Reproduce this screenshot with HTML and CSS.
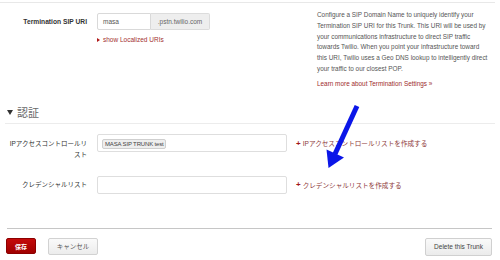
FILE: index.html
```html
<!DOCTYPE html>
<html lang="ja">
<head>
<meta charset="utf-8">
<title>Trunk settings</title>
<link rel="stylesheet" href="styles.css">
</head>
<body>
<div class="page">
  <div class="rule-top"></div>

  <div class="row row-uri">
    <div class="label label-bold">Termination SIP URI</div>
    <div class="field">
      <div class="input-group">
        <div class="input input-short">masa</div>
        <div class="addon">.pstn.twilio.com</div>
      </div>
      <a class="toggle" href="#"><span class="caret"></span>show Localized URIs</a>
    </div>
    <div class="help">
      <p class="help-text">Configure a SIP Domain Name to uniquely identify your Termination SIP URI for this Trunk. This URI will be used by your communications infrastructure to direct SIP traffic towards Twilio. When you point your infrastructure toward this URI, Twilio uses a Geo DNS lookup to intelligently direct your traffic to our closest POP.</p>
      <a class="help-link" href="#">Learn more about Termination Settings »</a>
    </div>
  </div>

  <div class="section-head"><span class="tri"></span>認証</div>

  <div class="row row-list">
    <div class="label">IPアクセスコントロールリスト</div>
    <div class="input input-wide"><span class="tag">MASA SIP TRUNK test</span></div>
    <a class="create" href="#"><span class="plus">+</span>IPアクセスコントロールリストを作成する</a>
  </div>

  <div class="row row-list row-cred">
    <div class="label">クレデンシャルリスト</div>
    <div class="input input-wide"></div>
    <a class="create" href="#"><span class="plus">+</span>クレデンシャルリストを作成する</a>
  </div>

  <div class="footer">
    <div class="btn-group">
      <button class="btn btn-save">保存</button>
      <button class="btn btn-cancel">キャンセル</button>
    </div>
    <button class="btn btn-delete">Delete this Trunk</button>
  </div>

  <svg class="arrow" width="500" height="260" viewBox="0 0 500 260">
    <line x1="357" y1="104" x2="335" y2="152" stroke="#0b16e8" stroke-width="5"/>
    <polygon points="326.5,147.5 344,155.5 328.5,166" fill="#0b16e8"/>
  </svg>
</div>
</body>
</html>
```

FILE: styles.css
```css
* { box-sizing: border-box; }

html, body {
  margin: 0;
  padding: 0;
  background: #fff;
}

body {
  font-family: "Liberation Sans", Arial, "Noto Sans CJK JP", sans-serif;
  font-size: 6.5px;
  color: #333;
  width: 500px;
  height: 260px;
  overflow: hidden;
}

a { text-decoration: none; }

.page {
  position: relative;
  padding: 0 5px;
  width: 500px;
}

.rule-top {
  height: 1px;
  background: #e8e8e8;
  margin: 2px -5px 0 -5px;
  width: 495px;
}

.row {
  display: flex;
  align-items: flex-start;
}

.row-uri {
  margin-top: 7px;
}

.label {
  width: 82px;
  flex: none;
  text-align: right;
  line-height: 11px;
  color: #333;
  font-family: "Liberation Sans", "Noto Sans CJK JP", sans-serif;
}

.label-bold {
  font-weight: bold;
  font-size: 6.7px;
  padding-top: 6px;
}

.field {
  width: 190px;
  margin-left: 10px;
  flex: none;
  padding-top: 3px;
}

.input-group {
  display: flex;
  height: 17px;
}

.input {
  border: 1px solid #d9d9d9;
  border-radius: 2px;
  background: #fff;
  color: #555;
  display: flex;
  align-items: center;
}

.input-short {
  width: 54px;
  padding-left: 5px;
  border-radius: 2px 0 0 2px;
  font-size: 6.5px;
}

.addon {
  width: 59px;
  background: #eeeeee;
  border: 1px solid #dcdcdc;
  border-left: none;
  border-radius: 0 2px 2px 0;
  color: #666;
  display: flex;
  align-items: center;
  justify-content: center;
  font-size: 6.5px;
}

.toggle {
  display: flex;
  align-items: center;
  margin-top: 5px;
  color: #a3302f;
  line-height: 10px;
}

.caret {
  width: 0;
  height: 0;
  border-top: 2px solid transparent;
  border-bottom: 2px solid transparent;
  border-left: 3px solid #b01818;
  margin-right: 3px;
}

.help {
  width: 172px;
  margin-left: 30px;
  color: #555;
  font-size: 6.4px;
  line-height: 10.8px;
}

.help-text {
  margin: 0;
}

.help-link {
  display: block;
  margin-top: 3.8px;
  color: #9e2d2d;
}

.section-head {
  margin-top: 14px;
  height: 21px;
  line-height: 18px;
  border-bottom: 1px solid #ececec;
  display: flex;
  align-items: center;
  padding-left: 2px;
  padding-bottom: 2px;
  font-family: "Noto Sans CJK JP", sans-serif;
  font-size: 11px;
  color: #6a6a6a;
}

.tri {
  width: 0;
  height: 0;
  border-left: 3.5px solid transparent;
  border-right: 3.5px solid transparent;
  border-top: 5px solid #333;
  margin-right: 4px;
}

.row-list {
  margin-top: 10px;
  align-items: flex-start;
}

.row-list .label {
  padding-top: 3.5px;
  font-size: 6.5px;
}

.row-cred {
  margin-top: 16px;
}

.input-wide {
  width: 190px;
  height: 18px;
  margin-left: 10px;
  flex: none;
  padding-left: 4px;
  border-color: #dedede;
}

.tag {
  display: inline-block;
  height: 10px;
  line-height: 9px;
  padding: 0 1px 0 2px;
  background: #eeeeee;
  border: 1px solid #cfcfcf;
  border-radius: 2px;
  font-size: 6px;
  letter-spacing: -0.15px;
  color: #444;
  margin-top: 1px;
}

.create {
  margin-left: 9px;
  height: 18px;
  display: flex;
  align-items: center;
  color: #8e3a3a;
  font-family: "Liberation Sans", "Noto Sans CJK JP", sans-serif;
  font-size: 6.6px;
}

.plus {
  color: #a01818;
  font-weight: bold;
  font-size: 8px;
  margin-right: 2px;
}

.footer {
  margin-top: 34px;
  border-top: 1px solid #c6c6c6;
  padding-top: 9px;
  display: flex;
  justify-content: space-between;
  align-items: flex-start;
  width: 485px;
  margin-left: 2px;
}

.btn-group {
  display: flex;
  align-items: center;
  gap: 12px;
}

.btn {
  font-family: "Noto Sans CJK JP", "Liberation Sans", sans-serif;
  border-radius: 2px;
  padding: 0;
  margin: 0;
  cursor: pointer;
}

.btn-save {
  width: 30px;
  height: 16px;
  margin-left: -1px;
  background: linear-gradient(#c40a0a, #a00000);
  border: 1px solid #8c0000;
  color: #fff;
  font-size: 6px;
  font-weight: bold;
}

.btn-cancel {
  width: 50px;
  height: 17px;
  background: linear-gradient(#fafafa, #ececec);
  border: 1px solid #d2d2d2;
  color: #555;
  font-size: 6.5px;
}

.btn-delete {
  width: 67px;
  height: 18px;
  background: linear-gradient(#fafafa, #ebebeb);
  border: 1px solid #d0d0d0;
  color: #444;
  font-family: "Liberation Sans", sans-serif;
  font-size: 6.5px;
}

.arrow {
  position: absolute;
  left: 0;
  top: 0;
  pointer-events: none;
}
```
